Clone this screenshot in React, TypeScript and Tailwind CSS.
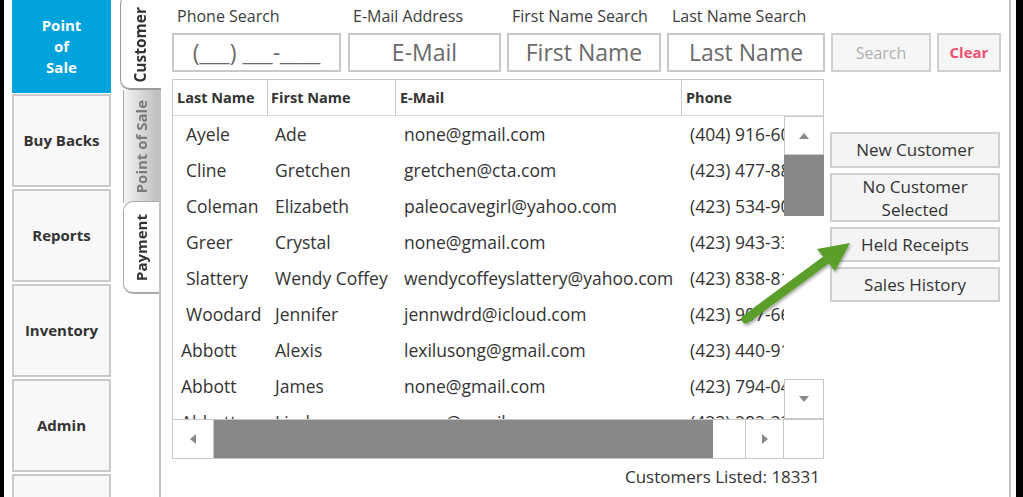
import React from 'react';

const FONT = { fontFamily: '"Open Sans", "Noto Sans", sans-serif' };

const rows = [
  { last: 'Ayele', first: 'Ade', email: 'none@gmail.com', phone: '(404) 916-6021', pad: 'pl-[13px]' },
  { last: 'Cline', first: 'Gretchen', email: 'gretchen@cta.com', phone: '(423) 477-8812', pad: 'pl-[13px]' },
  { last: 'Coleman', first: 'Elizabeth', email: 'paleocavegirl@yahoo.com', phone: '(423) 534-9020', pad: 'pl-[13px]' },
  { last: 'Greer', first: 'Crystal', email: 'none@gmail.com', phone: '(423) 943-3317', pad: 'pl-[13px]' },
  { last: 'Slattery', first: 'Wendy Coffey', email: 'wendycoffeyslattery@yahoo.com', phone: '(423) 838-8105', pad: 'pl-[13px]' },
  { last: 'Woodard', first: 'Jennifer', email: 'jennwdrd@icloud.com', phone: '(423) 907-6634', pad: 'pl-[13px]' },
  { last: 'Abbott', first: 'Alexis', email: 'lexilusong@gmail.com', phone: '(423) 440-9187', pad: 'pl-[8px]' },
  { last: 'Abbott', first: 'James', email: 'none@gmail.com', phone: '(423) 794-0452', pad: 'pl-[8px]' },
  { last: 'Abbott', first: 'Linda', email: 'none@gmail.com', phone: '(423) 282-3390', pad: 'pl-[8px]' },
];

const navItems = ['Buy Backs', 'Reports', 'Inventory', 'Admin', ''];

function Tri({ dir }: { dir: 'up' | 'down' | 'left' | 'right' }) {
  const pts = {
    up: '0,6 5,0 10,6',
    down: '0,0 10,0 5,6',
    left: '6,0 6,10 0,5',
    right: '0,0 0,10 6,5',
  }[dir];
  const w = dir === 'up' || dir === 'down' ? 10 : 6;
  const h = dir === 'up' || dir === 'down' ? 6 : 10;
  return (
    <svg width={w} height={h} viewBox={`0 0 ${w} ${h}`}>
      <polygon points={pts} fill="#8a8a8a" />
    </svg>
  );
}

function SearchField({ label, placeholder, width, gap }: { label: string; placeholder: string; width: string; gap: string }) {
  return (
    <div className={`flex flex-col ${width} ${gap}`}>
      <div className="h-[22px] pl-[5px] text-[16px] leading-[22px] text-[#3c3c3c] whitespace-nowrap">{label}</div>
      <div className="mt-[6px] h-[39px] border-2 border-[#c8c8c8] bg-white flex items-center justify-center text-[23px] text-[#6a6a6a] whitespace-nowrap">
        {placeholder}
      </div>
    </div>
  );
}

export default function App() {
  return (
    <div className="w-[1023px] h-[497px] overflow-hidden flex bg-white relative text-[#333]" style={FONT}>
      {/* left frame */}
      <div className="w-[4px] bg-black shrink-0" />
      <div className="w-[8px] shrink-0" />

      {/* sidebar */}
      <div className="w-[99px] shrink-0 flex flex-col">
        <div className="h-[93px] shrink-0 bg-[#01a3dc] text-white font-bold text-[15px] leading-[21px] flex items-center justify-center text-center">
          Point<br />of<br />Sale
        </div>
        <div className="flex flex-col gap-[2px] pt-[1px]">
          {navItems.map((n, i) => (
            <div
              key={i}
              className="h-[93px] shrink-0 bg-[#f8f8f8] border-2 border-[#cacaca] flex items-center justify-center font-bold text-[15px] text-[#333]"
            >
              {n}
            </div>
          ))}
        </div>
      </div>

      {/* tab strip */}
      <div className="w-[50px] shrink-0 flex flex-col">
        <div className="pl-[9px] -mt-[6px] shrink-0">
          <div className="h-[96px] pt-[6px] bg-white border-l-[1.5px] border-t-[1.5px] border-b-2 border-[#9a9a9a] rounded-l-[10px] flex items-center justify-center">
            <span className="[writing-mode:vertical-rl] rotate-180 font-bold text-[15.5px] text-[#333]">Customer</span>
          </div>
        </div>
        <div className="flex-1 border-r-2 border-[#c4c4c4] flex flex-col pl-[12px]">
          <div className="h-[113px] shrink-0 bg-gradient-to-r from-[#f4f4f4] to-[#bdbdbd] border-l-[1.5px] border-[#aaa] flex items-center justify-center">
            <span className="[writing-mode:vertical-rl] rotate-180 font-bold text-[15px] text-[#7a7a7a] whitespace-nowrap">Point of Sale</span>
          </div>
          <div className="-mt-[2px] h-[93px] shrink-0 bg-white border-l-[1.5px] border-t-[1.5px] border-b-2 border-[#aaa] rounded-l-[10px] flex items-center justify-center">
            <span className="[writing-mode:vertical-rl] rotate-180 font-bold text-[15px] text-[#333]">Payment</span>
          </div>
        </div>
      </div>

      {/* content */}
      <div className="w-[850px] shrink-0 border-r-2 border-[#c4c4c4] pl-[11px] relative">
        <div className="flex pt-[5px]">
          <SearchField label="Phone Search" placeholder="(___) ___-____" width="w-[169px]" gap="" />
          <SearchField label="E-Mail Address" placeholder="E-Mail" width="w-[153px]" gap="ml-[7px]" />
          <SearchField label="First Name Search" placeholder="First Name" width="w-[154px]" gap="ml-[6px]" />
          <SearchField label="Last Name Search" placeholder="Last Name" width="w-[158px]" gap="ml-[6px]" />
          <div className="ml-[6px] mt-[28px] w-[100px] h-[39px] border-2 border-[#d0d0d0] bg-[#f6f6f6] flex items-center justify-center text-[16px] text-[#b0b0b0]">
            Search
          </div>
          <div className="ml-[6px] mt-[28px] w-[64px] h-[39px] border-2 border-[#d0d0d0] bg-[#f6f6f6] flex items-center justify-center text-[15px] font-bold text-[#f0506e]">
            Clear
          </div>
        </div>

        <div className="flex mt-[7px]">
          {/* table */}
          <div className="flex flex-col">
            <div className="w-[652px] h-[380px] border border-[#c8c8c8] flex flex-col">
              <div className="h-[36px] shrink-0 flex border-b border-[#dcdcdc] font-bold text-[14.5px] text-[#333] items-stretch">
                <div className="w-[95px] shrink-0 pl-[4px] flex items-center border-r border-[#c8c8c8]">Last Name</div>
                <div className="w-[128px] shrink-0 pl-[3px] flex items-center border-r border-[#c8c8c8]">First Name</div>
                <div className="w-[286px] shrink-0 pl-[4px] flex items-center border-r border-[#c8c8c8]">E-Mail</div>
                <div className="flex-1 pl-[4px] flex items-center">Phone</div>
              </div>
              <div className="flex h-[303px] shrink-0">
                <div className="w-[611px] shrink-0 overflow-hidden">
                  {rows.map((r, i) => (
                    <div key={i} className="h-[36px] flex items-center text-[17.5px] text-[#333] whitespace-nowrap">
                      <div className={`w-[95px] shrink-0 ${r.pad}`}>{r.last}</div>
                      <div className="w-[128px] shrink-0 pl-[7px]">{r.first}</div>
                      <div className="w-[286px] shrink-0 pl-[8px]">{r.email}</div>
                      <div className="shrink-0 pl-[8px]">{r.phone}</div>
                    </div>
                  ))}
                </div>
                <div className="w-[40px] shrink-0 flex flex-col bg-white">
                  <div className="h-[39px] border border-[#c8c8c8] bg-white flex items-center justify-center">
                    <Tri dir="up" />
                  </div>
                  <div className="h-[61px] bg-[#888]" />
                  <div className="flex-1" />
                  <div className="h-[40px] border border-[#c8c8c8] bg-white flex items-center justify-center">
                    <Tri dir="down" />
                  </div>
                </div>
              </div>
              <div className="flex flex-1 border-t border-[#c8c8c8]">
                <div className="w-[41px] border-r border-[#c8c8c8] flex items-center justify-center">
                  <Tri dir="left" />
                </div>
                <div className="w-[499px] bg-[#888]" />
                <div className="w-[32px]" />
                <div className="w-[39px] border-x border-[#c8c8c8] flex items-center justify-center">
                  <Tri dir="right" />
                </div>
                <div className="flex-1" />
              </div>
            </div>
            <div className="mt-[7px] pr-[4px] text-right text-[17px] leading-[22px] text-[#333]">Customers Listed: 18331</div>
          </div>

          {/* action buttons */}
          <div className="ml-[6px] mt-[53px] w-[170px] flex flex-col gap-[5px] text-[17px] text-[#333]">
            <div className="h-[36px] border-2 border-[#d0d0d0] bg-[#f4f4f4] flex items-center justify-center">New Customer</div>
            <div className="h-[49px] border-2 border-[#d0d0d0] bg-[#f4f4f4] flex items-center justify-center text-center leading-[23px]">
              No Customer<br />Selected
            </div>
            <div className="h-[35px] border-2 border-[#d0d0d0] bg-[#f4f4f4] flex items-center justify-center">Held Receipts</div>
            <div className="h-[35px] border-2 border-[#d0d0d0] bg-[#f4f4f4] flex items-center justify-center">Sales History</div>
          </div>
        </div>
      </div>

      {/* right frame */}
      <div className="w-[5px] shrink-0" />
      <div className="flex-1 bg-black" />

      {/* green annotation arrow */}
      <svg className="absolute left-0 top-0 pointer-events-none" width="1023" height="497">
        <defs>
          <filter id="sh" x="-20%" y="-20%" width="140%" height="140%">
            <feDropShadow dx="1" dy="2" stdDeviation="1.5" floodColor="#000" floodOpacity="0.35" />
          </filter>
        </defs>
        <g filter="url(#sh)">
          <line x1="746" y1="319" x2="826" y2="260" stroke="#5c9e2c" strokeWidth="9" strokeLinecap="round" />
          <polygon points="850,243 817,249 835,271" fill="#5c9e2c" />
        </g>
      </svg>
    </div>
  );
}
